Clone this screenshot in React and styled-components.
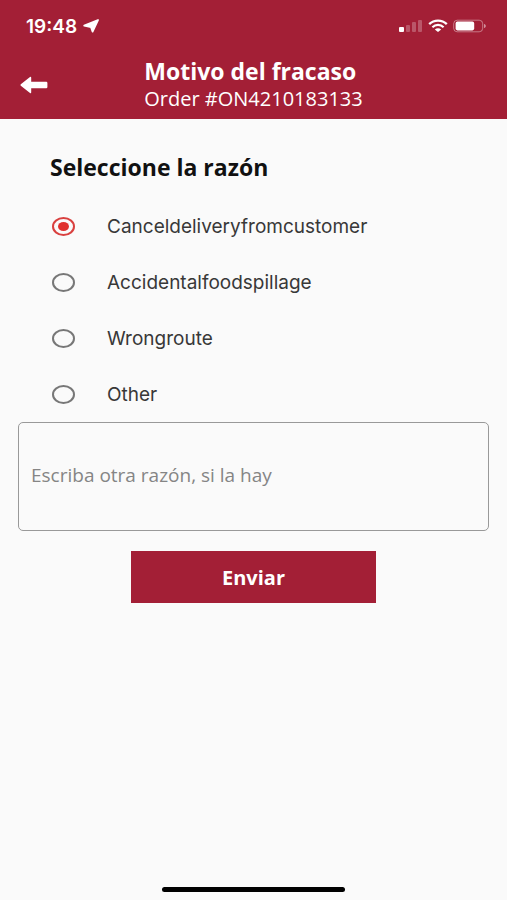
import React, { useState } from 'react'
import styled, { createGlobalStyle } from 'styled-components'

const reasons = [
  'Canceldeliveryfromcustomer',
  'Accidentalfoodspillage',
  'Wrongroute',
  'Other',
]

function StatusIcons() {
  return (
    <Icons>
      <svg width="24" height="14" viewBox="0 0 24 14" fill="#fff" aria-hidden="true">
        <rect x="0" y="8" width="5" height="5" rx="1" />
        <g opacity="0.25">
          <rect x="7" y="6" width="4" height="7" rx="1" />
          <rect x="13" y="3" width="4" height="10" rx="1" />
          <rect x="19" y="1" width="4" height="12" rx="1" />
        </g>
      </svg>
      <svg width="20" height="14" viewBox="0 0 20 14" fill="none" stroke="#fff" aria-hidden="true">
        <path d="M1.2 5.2C6.2 0.4 13.8 0.4 18.8 5.2" strokeWidth="2.4" />
        <path d="M4.4 8.2C7.6 5.2 12.4 5.2 15.6 8.2" strokeWidth="2.2" />
        <path d="M10 13L6.8 10.4C8.6 8.9 11.4 8.9 13.2 10.4Z" fill="#fff" stroke="none" />
      </svg>
      <svg width="34" height="14" viewBox="0 0 34 14" aria-hidden="true">
        <rect x="0.7" y="1.2" width="29" height="11.6" rx="3.5" fill="none" stroke="#fff" strokeOpacity="0.4" />
        <rect x="2.6" y="2.6" width="18.6" height="8.8" rx="1.8" fill="#fff" />
        <path d="M31 5C33.4 5.6 33.4 8.4 31 9Z" fill="#fff" fillOpacity="0.5" />
      </svg>
    </Icons>
  )
}

function App() {
  const [reason, setReason] = useState(reasons[0])
  const [other, setOther] = useState('')

  return (
    <Page>
      <GlobalStyle />
      <Header>
        <StatusBar>
          <Clock>
            19:48
            <svg width="16" height="14" viewBox="0 0 16 14" fill="#fff" stroke="#fff" strokeLinejoin="round" aria-hidden="true">
              <path d="M15 1L9.6 12.6L8 8.2L1.2 6.6Z" strokeWidth="1.8" />
            </svg>
          </Clock>
          <StatusIcons />
        </StatusBar>
        <NavBar>
          <Back type="button" aria-label="Volver">
            <svg width="28" height="18" viewBox="0 0 28 18" fill="#fff" aria-hidden="true">
              <path d="M0.8 8.2L10 1Q11.2 0.4 11.2 1.8V5.8H26.2Q27.4 5.8 27.4 7V11Q27.4 12.2 26.2 12.2H11.2V16.2Q11.2 17.6 10 17L0.8 9.8Q0 9 0.8 8.2Z" />
            </svg>
          </Back>
          <div>
            <Title>Motivo del fracaso</Title>
            <Order>Order #ON4210183133</Order>
          </div>
        </NavBar>
      </Header>
      <Form onSubmit={(e) => e.preventDefault()}>
        <Reasons>
          <Legend>Seleccione la razón</Legend>
          {reasons.map((item) => (
            <Reason key={item}>
              <Radio
                type="radio"
                name="reason"
                value={item}
                checked={reason === item}
                onChange={() => setReason(item)}
              />
              {item}
            </Reason>
          ))}
        </Reasons>
        <OtherReason
          aria-label="Escriba otra razón"
          placeholder="Escriba otra razón, si la hay"
          value={other}
          onChange={(e) => setOther(e.target.value)}
        />
        <Submit type="submit">Enviar</Submit>
      </Form>
      <HomeBar />
    </Page>
  )
}

export default App

const GlobalStyle = createGlobalStyle`
  * {
    box-sizing: border-box;
  }
  body {
    margin: 0;
    background: #fafafa;
    font-family: Inter, "Open Sans", sans-serif;
  }
`
const Page = styled.div`
  display: flex;
  flex-direction: column;
  min-height: 100vh;
`
const Header = styled.header`
  background: #a31f36;
  color: white;
  padding-bottom: 7px;
`
const StatusBar = styled.div`
  display: flex;
  align-items: center;
  justify-content: space-between;
  height: 52px;
  padding: 0 20px 0 26px;
`
const Clock = styled.div`
  display: flex;
  align-items: center;
  gap: 6px;
  font-size: 19px;
  font-weight: 600;
`
const Icons = styled.div`
  display: flex;
  align-items: center;
  gap: 5px;
`
const NavBar = styled.div`
  display: grid;
  grid-template-columns: 1fr auto 1fr;
  align-items: center;
  padding: 6px 20px 0;
`
const Back = styled.button`
  display: flex;
  justify-self: start;
  padding: 0;
  border: none;
  background: none;
  cursor: pointer;
`
const Title = styled.h1`
  margin: 0;
  font-family: "Open Sans", sans-serif;
  font-size: 23px;
  line-height: 27px;
  font-weight: 700;
`
const Order = styled.p`
  margin: 0;
  font-family: "Open Sans", sans-serif;
  font-size: 20px;
  line-height: 27px;
`
const Form = styled.form`
  display: flex;
  flex-direction: column;
  align-items: center;
  padding: 31px 18px 0;
`
const Reasons = styled.fieldset`
  align-self: stretch;
  margin: 0;
  padding: 0 32px;
  border: none;
`
const Legend = styled.legend`
  padding: 0 0 14px;
  font-family: "Open Sans", sans-serif;
  font-size: 23px;
  line-height: 34px;
  font-weight: 700;
  color: #111;
`
const Reason = styled.label`
  display: flex;
  align-items: center;
  gap: 32px;
  height: 56px;
  padding-left: 2px;
  font-size: 19px;
  color: #383838;
  cursor: pointer;
`
const Radio = styled.input`
  appearance: none;
  display: grid;
  place-items: center;
  width: 23px;
  height: 19px;
  margin: 0;
  border: 2px solid #777;
  border-radius: 50%;
  &:checked {
    border-color: #d9403f;
  }
  &:checked::before {
    content: '';
    width: 11px;
    height: 9px;
    border-radius: 50%;
    background: #e0312f;
  }
`
const OtherReason = styled.textarea`
  width: 100%;
  height: 109px;
  padding: 40px 12px 0;
  border: 1px solid #999;
  border-radius: 5px;
  background: transparent;
  font-family: "Open Sans", sans-serif;
  font-size: 19px;
  line-height: 25px;
  color: #383838;
  resize: none;
  &::placeholder {
    color: #858585;
    opacity: 1;
  }
`
const Submit = styled.button`
  width: 52%;
  height: 52px;
  margin-top: 20px;
  border: none;
  background: #a31f36;
  color: white;
  font-family: "Open Sans", sans-serif;
  font-size: 20px;
  font-weight: 700;
  cursor: pointer;
`
const HomeBar = styled.div`
  width: 36%;
  height: 5px;
  margin: auto auto 8px;
  border-radius: 3px;
  background: black;
`
